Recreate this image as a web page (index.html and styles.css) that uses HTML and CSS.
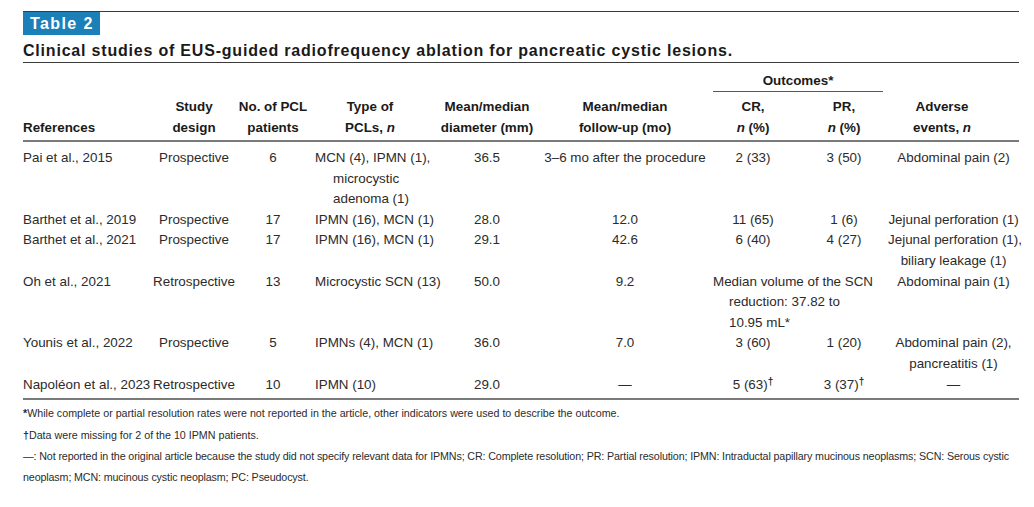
FILE: index.html
```html
<!DOCTYPE html>
<html lang="en">
<head>
<meta charset="utf-8">
<title>Table 2</title>
<link rel="stylesheet" href="styles.css">
</head>
<body>
<div class="page">
  <div class="badge-row"><span class="badge">Table 2</span></div>
  <h1 class="title">Clinical studies of EUS-guided radiofrequency ablation for pancreatic cystic lesions.</h1>
  <table class="data">
    <colgroup>
      <col class="c-ref"><col class="c-study"><col class="c-no"><col class="c-type"><col class="c-diam"><col class="c-follow"><col class="c-cr"><col class="c-pr"><col class="c-adv">
    </colgroup>
    <thead>
      <tr class="h1">
        <th rowspan="2" class="left">References</th>
        <th rowspan="2">Study<br>design</th>
        <th rowspan="2">No. of PCL<br>patients</th>
        <th rowspan="2">Type of<br>PCLs, <i>n</i></th>
        <th rowspan="2">Mean/median<br>diameter (mm)</th>
        <th rowspan="2" class="follow">Mean/median<br>follow-up (mo)</th>
        <th colspan="2" class="outcomes"><div class="outcomes-label">Outcomes*</div></th>
        <th rowspan="2" class="adv">Adverse<br>events, <i>n</i></th>
      </tr>
      <tr class="h2">
        <th>CR,<br><i>n</i> (%)</th>
        <th class="pr">PR,<br><i>n</i> (%)</th>
      </tr>
    </thead>
    <tbody>
      <tr>
        <td class="left">Pai et al., 2015</td>
        <td>Prospective</td>
        <td>6</td>
        <td class="type">MCN (4), IPMN (1),<br>microcystic<br>adenoma (1)</td>
        <td>36.5</td>
        <td class="follow">3–6 mo after the procedure</td>
        <td>2 (33)</td>
        <td class="pr">3 (50)</td>
        <td>Abdominal pain (2)</td>
      </tr>
      <tr>
        <td class="left">Barthet et al., 2019</td>
        <td>Prospective</td>
        <td>17</td>
        <td class="type">IPMN (16), MCN (1)</td>
        <td>28.0</td>
        <td class="follow">12.0</td>
        <td>11 (65)</td>
        <td class="pr">1 (6)</td>
        <td>Jejunal perforation (1)</td>
      </tr>
      <tr>
        <td class="left">Barthet et al., 2021</td>
        <td>Prospective</td>
        <td>17</td>
        <td class="type">IPMN (16), MCN (1)</td>
        <td>29.1</td>
        <td class="follow">42.6</td>
        <td>6 (40)</td>
        <td class="pr">4 (27)</td>
        <td>Jejunal perforation (1),<br>biliary leakage (1)</td>
      </tr>
      <tr>
        <td class="left">Oh et al., 2021</td>
        <td>Retrospective</td>
        <td>13</td>
        <td class="type">Microcystic SCN (13)</td>
        <td>50.0</td>
        <td class="follow">9.2</td>
        <td colspan="2" class="span-note">Median volume of the SCN<br>reduction: 37.82 to<br>10.95 mL*</td>
        <td>Abdominal pain (1)</td>
      </tr>
      <tr>
        <td class="left">Younis et al., 2022</td>
        <td>Prospective</td>
        <td>5</td>
        <td class="type">IPMNs (4), MCN (1)</td>
        <td>36.0</td>
        <td class="follow">7.0</td>
        <td>3 (60)</td>
        <td class="pr">1 (20)</td>
        <td>Abdominal pain (2),<br>pancreatitis (1)</td>
      </tr>
      <tr>
        <td class="left">Napoléon et al., 2023</td>
        <td>Retrospective</td>
        <td>10</td>
        <td class="type">IPMN (10)</td>
        <td>29.0</td>
        <td class="follow">—</td>
        <td>5 (63)<sup class="dag">†</sup></td>
        <td class="pr">3 (37)<sup class="dag">†</sup></td>
        <td>—</td>
      </tr>
    </tbody>
  </table>
  <div class="notes">
    <p><b>*</b>While complete or partial resolution rates were not reported in the article, other indicators were used to describe the outcome.</p>
    <p><b>†</b>Data were missing for 2 of the 10 IPMN patients.</p>
    <p class="abbr">—: Not reported in the original article because the study did not specify relevant data for IPMNs; CR: Complete resolution; PR: Partial resolution; IPMN: Intraductal papillary mucinous neoplasms; SCN: Serous cystic neoplasm; MCN: mucinous cystic neoplasm; PC: Pseudocyst.</p>
  </div>
</div>
</body>
</html>
```
FILE: styles.css
```css
html, body {
  margin: 0;
  padding: 0;
  background: #ffffff;
}

body {
  font-family: "Liberation Sans", Arial, sans-serif;
  color: #2b2b2b;
}

.page {
  width: 996px;
  margin-left: 23px;
  padding-top: 11px;
}

.badge-row {
  border-top: 1px solid #3a3a3a;
  height: 23px;
}

.badge {
  display: inline-block;
  background: #1b80b8;
  color: #ffffff;
  font-weight: bold;
  font-size: 16px;
  letter-spacing: 1.4px;
  line-height: 23px;
  height: 23px;
  padding: 0 6px 0 7px;
}

.title {
  margin: 5px 0 0 0;
  font-size: 16px;
  line-height: 22px;
  font-weight: bold;
  letter-spacing: 0.8px;
  color: #1a1a1a;
  padding-bottom: 0;
  border-bottom: 1.5px solid #3a3a3a;
}

.data {
  width: 996px;
  table-layout: fixed;
  border-collapse: collapse;
  font-size: 13.4px;
  line-height: 20.6px;
}

.c-ref { width: 127px; }
.c-study { width: 88px; }
.c-no { width: 70px; }
.c-type { width: 124px; }
.c-diam { width: 110px; }
.c-follow { width: 171px; }
.c-cr { width: 80px; }
.c-pr { width: 95px; }
.c-adv { width: 131px; }

th, td {
  padding: 0;
  text-align: center;
  white-space: nowrap;
}

th {
  font-weight: bold;
  color: #1a1a1a;
  line-height: 21px;
  vertical-align: bottom;
}

thead {
  border-bottom: 2px solid #7a7a7a;
}

.h1 th {
  padding-bottom: 2px;
}

.h1 th.outcomes {
  padding: 7px 0 0 0;
  vertical-align: top;
}

.outcomes-label {
  margin-right: 5px;
  border-bottom: 1px solid #5a5a5a;
  line-height: 21px;
}

.h2 th {
  padding-top: 4px;
  padding-bottom: 2px;
}

th.left, td.left {
  text-align: left;
}

.follow {
  padding-right: 5px;
}

.pr {
  padding-left: 7px;
}

th.adv {
  padding-right: 23px;
}

td {
  vertical-align: top;
}

tbody tr:first-child td {
  padding-top: 6px;
}

tbody tr:last-child td {
  padding-bottom: 3px;
}

tbody {
  border-bottom: 2px solid #7a7a7a;
}

td.type {
  text-align: left;
  padding-left: 25px;
  text-indent: -18px;
}

td.span-note {
  text-align: left;
  padding-left: 16px;
  text-indent: -16px;
}

.dag {
  font-weight: bold;
  font-size: 10px;
  line-height: 0;
  vertical-align: 4px;
}

.notes {
  margin-top: 3px;
  font-size: 10.7px;
  line-height: 20.5px;
  color: #2b2b2b;
}

.notes p {
  margin: 0 0 1px 0;
}

.notes p.abbr {
  letter-spacing: -0.12px;
}
```
